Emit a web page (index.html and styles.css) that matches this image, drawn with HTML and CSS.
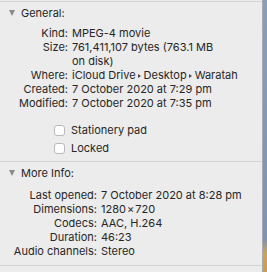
FILE: index.html
```html
<!DOCTYPE html>
<html>
<head>
<meta charset="utf-8">
<link rel="stylesheet" href="styles.css">
</head>
<body>
<div class="window">
  <div class="panel">
    <section class="section">
      <div class="header"><span class="tri"></span><span>General:</span></div>
      <div class="grid general">
        <div class="lbl">Kind:</div><div class="val">MPEG-4 movie</div>
        <div class="lbl">Size:</div><div class="val">761,411,107 bytes (763.1 MB<br>on disk)</div>
        <div class="lbl">Where:</div><div class="val">iCloud Drive<span class="arr"></span>Desktop<span class="arr"></span>Waratah</div>
        <div class="lbl">Created:</div><div class="val">7 October 2020 at 7:29 pm</div>
        <div class="lbl">Modified:</div><div class="val">7 October 2020 at 7:35 pm</div>
      </div>
      <div class="checks">
        <label class="check"><span class="box"></span><span>Stationery pad</span></label>
        <label class="check"><span class="box"></span><span>Locked</span></label>
      </div>
    </section>
    <section class="section">
      <div class="header"><span class="tri"></span><span>More Info:</span></div>
      <div class="grid more">
        <div class="lbl">Last opened:</div><div class="val">7 October 2020 at 8:28 pm</div>
        <div class="lbl">Dimensions:</div><div class="val">1280<span class="times">×</span>720</div>
        <div class="lbl">Codecs:</div><div class="val">AAC, H.264</div>
        <div class="lbl">Duration:</div><div class="val">46:23</div>
        <div class="lbl">Audio channels:</div><div class="val">Stereo</div>
      </div>
    </section>
    <section class="section last"></section>
  </div>
  <div class="desktop"></div>
</div>
</body>
</html>
```

FILE: styles.css
```css
html, body {
  margin: 0;
  padding: 0;
}
body {
  width: 267px;
  height: 272px;
  overflow: hidden;
  font-family: Inter, "Noto Sans", sans-serif;
  font-size: 11px;
  color: #262626;
}
.window {
  display: flex;
  height: 272px;
}
.panel {
  width: 263px;
  background: #ececec;
  padding-top: 1px;
  box-sizing: border-box;
  border-right: 1px solid #a9aab0;
}
.desktop {
  flex: 1;
  background: linear-gradient(to bottom, #8c9dbb 0%, #7f92b5 88%, #c9a35f 93%, #c89d55 100%);
}
.section {
  border-top: 1px solid #d5d5d5;
}
.header {
  display: flex;
  align-items: center;
  height: 14px;
  line-height: 14px;
  padding-top: 4px;
  padding-left: 9px;
  gap: 6px;
}
.tri {
  width: 0;
  height: 0;
  border-left: 3.5px solid transparent;
  border-right: 3.5px solid transparent;
  border-top: 6px solid #8a8a8a;
}
.grid {
  display: grid;
  column-gap: 4px;
  line-height: 14px;
}
.general {
  grid-template-columns: 68px auto;
  margin-top: 6px;
}
.more {
  grid-template-columns: 97px auto;
  margin-top: 8px;
  padding-bottom: 7px;
}
.lbl {
  text-align: right;
  white-space: nowrap;
}
.val {
  white-space: nowrap;
}
.arr {
  display: inline-block;
  width: 0;
  height: 0;
  border-top: 2.5px solid transparent;
  border-bottom: 2.5px solid transparent;
  border-left: 3px solid #4a4a4a;
  margin: 0 2.5px 1px 2.5px;
  vertical-align: middle;
}
.times {
  margin: 0 1px;
}
.checks {
  display: flex;
  flex-direction: column;
  padding-left: 54px;
  margin-top: 11px;
  padding-bottom: 4px;
}
.check {
  display: flex;
  align-items: center;
  height: 18px;
  gap: 6px;
}
.box {
  width: 11px;
  height: 11px;
  background: #fff;
  border: 1px solid #b9b9b9;
  border-radius: 3px;
  box-sizing: border-box;
}
.section.last {
  height: 10px;
}
```
